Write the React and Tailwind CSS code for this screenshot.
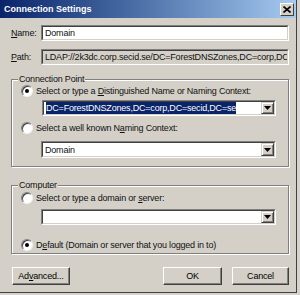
import React from "react";

const F = { fontFamily: '"Liberation Sans", Arial, sans-serif' };

function Radio({ checked }) {
  return (
    <div className="relative w-[12px] h-[12px] shrink-0 rounded-full bg-white border border-t-[#808080] border-l-[#808080] border-b-[#f4f2ee] border-r-[#f4f2ee] shadow-[inset_1px_1px_0_#404040]">
      {checked && <div className="absolute left-[3px] top-[3px] w-[4px] h-[4px] rounded-full bg-black" />}
    </div>
  );
}

function Sunken({ className = "", children }) {
  return (
    <div className={"border border-t-[#808080] border-l-[#808080] border-b-white border-r-white " + className}>
      <div className="h-full w-full border border-t-[#404040] border-l-[#404040] border-b-[#d4d0c8] border-r-[#d4d0c8] overflow-hidden flex items-center">
        {children}
      </div>
    </div>
  );
}

function DropBtn() {
  return (
    <div className="h-full w-[13px] shrink-0 bg-[#d4d0c8] border border-t-[#d4d0c8] border-l-[#d4d0c8] border-b-[#404040] border-r-[#404040] shadow-[inset_1px_1px_0_#fff,inset_-1px_-1px_0_#808080] flex items-center justify-center">
      <svg width="7" height="4" viewBox="0 0 7 4"><path d="M0 0h7L3.5 4z" fill="#000" /></svg>
    </div>
  );
}

function Combo({ className = "", children, bg = "bg-white" }) {
  return (
    <Sunken className={className}>
      <div className={"flex-1 h-full flex items-center px-[2px] whitespace-nowrap overflow-hidden " + bg}>{children}</div>
      <DropBtn />
    </Sunken>
  );
}

function Button({ className = "", children }) {
  return (
    <div className={"h-[18px] bg-[#d4d0c8] border border-t-white border-l-white border-b-[#404040] border-r-[#404040] shadow-[inset_-1px_-1px_0_#808080] flex items-center justify-center text-black " + className}>
      {children}
    </div>
  );
}

function Group({ label, className = "", children }) {
  return (
    <div className={"relative border border-[#808080] shadow-[inset_1px_1px_0_#fff,1px_1px_0_#fff] " + className}>
      <div className="absolute left-[6px] -top-[7px] bg-[#d4d0c8] px-[1px] leading-[12px]">{label}</div>
      {children}
    </div>
  );
}

export default function App() {
  return (
    <div style={F} className="w-[300px] h-[295px] bg-[#d6d3ce] text-[9px] tracking-[-0.2px] text-[#111] leading-[12px]">
      <div className="w-[297px] h-[293px] bg-[#d4d0c8] border-r border-b border-r-[#404040] border-b-[#404040] flex flex-col">
        {/* title bar */}
        <div className="h-[18px] bg-gradient-to-r from-[#0a246a] to-[#a6caf0] flex items-center justify-between pl-[4px] pr-[2px]">
          <span className="text-white font-bold text-[9px] tracking-normal">Connection Settings</span>
          <div className="w-[14px] h-[13px] bg-[#d4d0c8] border border-t-white border-l-white border-b-[#404040] border-r-[#404040] flex items-center justify-center">
            <svg width="8" height="7" viewBox="0 0 8 7"><path d="M0.5 0.5L7.5 6.5M7.5 0.5L0.5 6.5" stroke="#000" strokeWidth="1.6" /></svg>
          </div>
        </div>
        <div className="pl-[11px] pr-[7px] flex flex-col">
          {/* name */}
          <div className="mt-[7px] flex items-center">
            <span className="w-[30px]"><u>N</u>ame:</span>
            <Sunken className="w-[248px] h-[16px] bg-white">
              <span className="px-[2px] bg-white h-full flex items-center w-full">Domain</span>
            </Sunken>
          </div>
          <div className="mt-[8px] flex items-center">
            <span className="w-[30px]"><u>P</u>ath:</span>
            <Sunken className="w-[248px] h-[16px] bg-[#d4d0c8]">
              <span className="px-[2px] whitespace-nowrap">LDAP://2k3dc.corp.secid.se/DC=ForestDNSZones,DC=corp,DC=secid,DC=se</span>
            </Sunken>
          </div>
          {/* connection point */}
          <Group label="Connection Point" className="mt-[14px] w-[278px] h-[88px]">
            <div className="pl-[9px] pt-[5px] flex flex-col">
              <div className="flex items-center gap-[3px]">
                <Radio checked />
                <span>Select or type a <u>D</u>istinguished Name or Naming Context:</span>
              </div>
              <Combo className="ml-[21px] mt-[3px] w-[234px] h-[16px]">
                <span className="bg-[#0a246a] text-white">DC=ForestDNSZones,DC=corp,DC=secid,DC=se</span>
              </Combo>
              <div className="mt-[6px] flex items-center gap-[3px]">
                <Radio />
                <span>Select a well known N<u>a</u>ming Context:</span>
              </div>
              <Combo className="ml-[20px] mt-[7px] w-[235px] h-[17px]">
                <span>Domain</span>
              </Combo>
            </div>
          </Group>
          {/* computer */}
          <Group label="Computer" className="mt-[18px] w-[278px] h-[69px]">
            <div className="pl-[9px] pt-[6px] flex flex-col">
              <div className="flex items-center gap-[3px]">
                <Radio />
                <span>Select or type a domain or <u>s</u>erver:</span>
              </div>
              <Combo className="ml-[20px] mt-[5px] w-[235px] h-[16px]">
                <span></span>
              </Combo>
              <div className="mt-[14px] flex items-center gap-[3px]">
                <Radio checked />
                <span>D<u>e</u>fault (Domain or server that you logged in to)</span>
              </div>
            </div>
          </Group>
          {/* buttons */}
          <div className="mt-[13px] flex items-center">
            <Button className="ml-[1px] w-[58px]">Ad<u>v</u>anced...</Button>
            <Button className="ml-[93px] w-[59px]">OK</Button>
            <Button className="ml-[10px] w-[57px]">Cancel</Button>
          </div>
        </div>
      </div>
    </div>
  );
}
